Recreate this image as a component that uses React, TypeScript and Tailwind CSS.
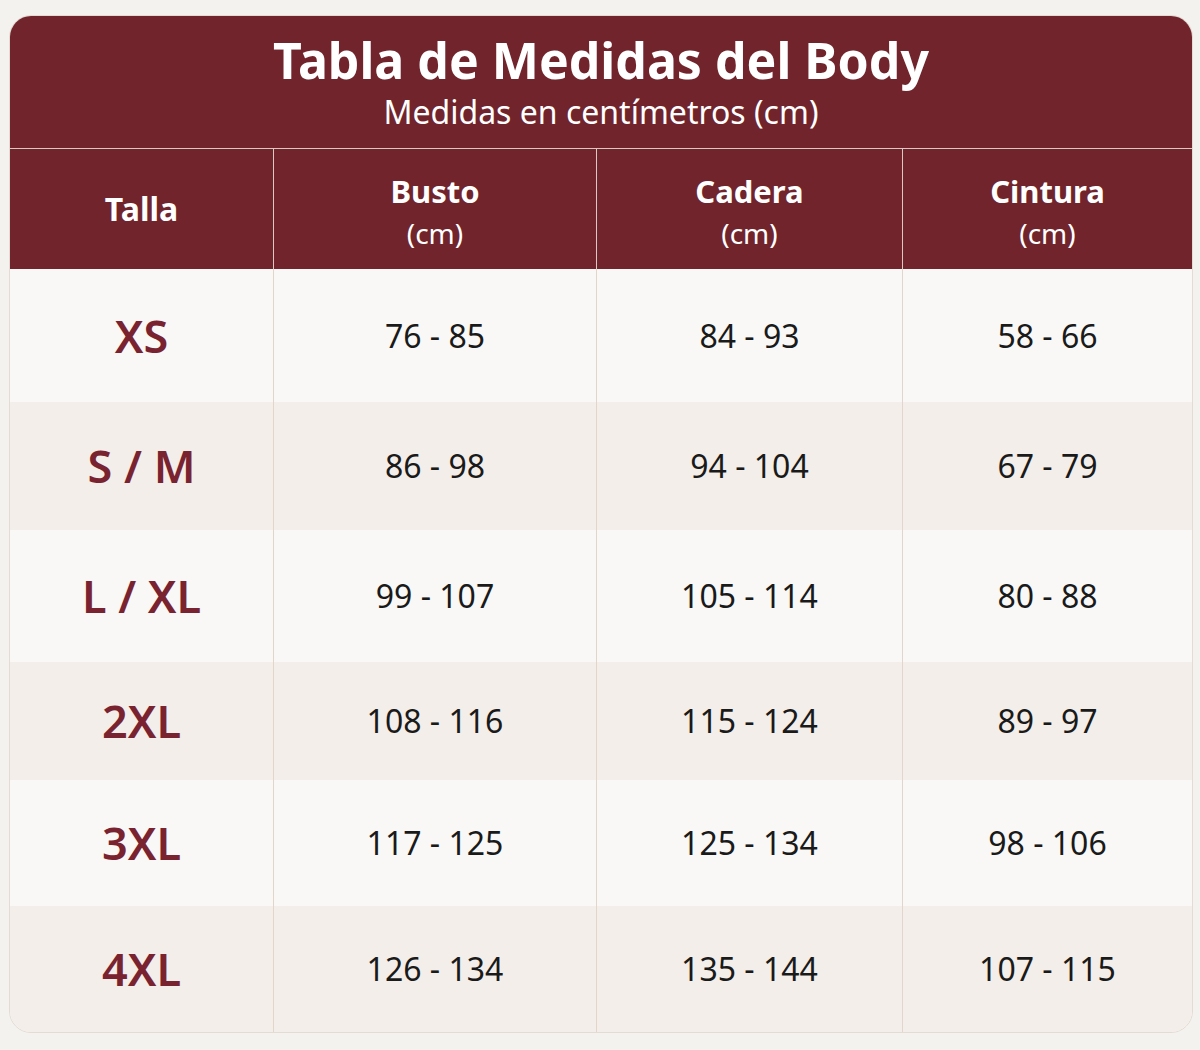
const rows = [
  { size: "XS", busto: "76 - 85", cadera: "84 - 93", cintura: "58 - 66", h: "h-[133px]" },
  { size: "S / M", busto: "86 - 98", cadera: "94 - 104", cintura: "67 - 79", h: "h-[128px]" },
  { size: "L / XL", busto: "99 - 107", cadera: "105 - 114", cintura: "80 - 88", h: "h-[132px]" },
  { size: "2XL", busto: "108 - 116", cadera: "115 - 124", cintura: "89 - 97", h: "h-[118px]" },
  { size: "3XL", busto: "117 - 125", cadera: "125 - 134", cintura: "98 - 106", h: "h-[126px]" },
  { size: "4XL", busto: "126 - 134", cadera: "135 - 144", cintura: "107 - 115", h: "h-[126px]" },
];

const cols = ["Busto", "Cadera", "Cintura"];

export default function App() {
  return (
    <div
      className="w-[1200px] h-[1050px] bg-[#f4f2ef] pt-[15px] pl-[9px]"
      style={{ fontFamily: '"Noto Sans", "Open Sans", sans-serif' }}
    >
      <div className="w-[1184px] rounded-[22px] overflow-hidden border border-[#e4dbd2] bg-[#f9f7f5]">
        {/* title band */}
        <div className="h-[133px] bg-[#71242b] text-white flex flex-col items-center pt-[12px] border-b border-[#d9c9c0]">
          <h1 className="text-[50px] font-bold leading-[64px]">Tabla de Medidas del Body</h1>
          <p className="text-[32px] leading-[40px]">Medidas en centímetros (cm)</p>
        </div>

        {/* column headers */}
        <div className="grid grid-cols-[263px_323px_306px_1fr] h-[120px] bg-[#71242b] text-white">
          <div className="flex items-center justify-center text-[32px] font-bold">Talla</div>
          {cols.map((c) => (
            <div key={c} className="flex flex-col items-center justify-center border-l border-[#d9c9c0] pt-[8px]">
              <span className="text-[31px] font-bold leading-[40px]">{c}</span>
              <span className="text-[28px] leading-[44px]">(cm)</span>
            </div>
          ))}
        </div>

        {/* rows */}
        {rows.map((r, i) => (
          <div
            key={r.size}
            className={`grid grid-cols-[263px_323px_306px_1fr] ${r.h} ${i % 2 === 1 ? "bg-[#f3eee9]" : "bg-[#f9f8f6]"}`}
          >
            <div className="flex items-center justify-center text-[45px] font-semibold text-[#7a2330]">{r.size}</div>
            <div className="flex items-center justify-center border-l border-[#e2d6cb] text-[32px] text-[#1a1a1a]">{r.busto}</div>
            <div className="flex items-center justify-center border-l border-[#e2d6cb] text-[32px] text-[#1a1a1a]">{r.cadera}</div>
            <div className="flex items-center justify-center border-l border-[#e2d6cb] text-[32px] text-[#1a1a1a]">{r.cintura}</div>
          </div>
        ))}
      </div>
    </div>
  );
}
